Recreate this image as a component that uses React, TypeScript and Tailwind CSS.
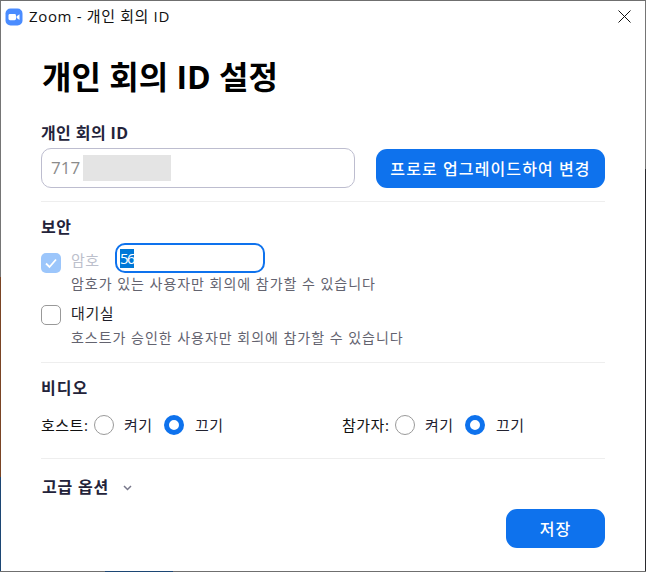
import React from "react";

function Radio({ on }: { on?: boolean }) {
  return on ? (
    <span className="block w-5 h-5 rounded-full border-[5px] border-[#0e72ed] bg-white shrink-0" />
  ) : (
    <span className="block w-5 h-5 rounded-full border border-[#9a9a9a] bg-white shrink-0" />
  );
}

function RadioGroup({ label, width }: { label: string; width: string }) {
  return (
    <div className={`flex items-center h-5 text-[15px] text-[#222230] ${width}`}>
      <span className="text-[#111] w-[53px] whitespace-nowrap tracking-[0.5px]">{label}</span>
      <Radio />
      <span className="ml-[10px] w-[40px] tracking-[0.5px]">켜기</span>
      <Radio on />
      <span className="ml-[11px] tracking-[0.5px]">끄기</span>
    </div>
  );
}

export default function App() {
  return (
    <div className="w-[646px] h-[572px] flex flex-col bg-white overflow-hidden font-['Open_Sans','Noto_Sans_CJK_KR',sans-serif]">
      <div className="h-px bg-[#6f6f6f] shrink-0" />
      <div className="flex flex-1 min-h-0">
        <div className="w-px flex flex-col shrink-0">
          <div className="h-[276px] bg-[#757575]" />
          <div className="h-[200px] bg-[#7a4424]" />
          <div className="flex-1 bg-[#1c4674]" />
        </div>
        <div className="flex-1 flex flex-col min-w-0">
          <div className="h-[31px] flex items-center justify-between shrink-0 pl-[4px] pr-[14px]">
            <div className="flex items-center gap-[6px]">
              <svg width="18" height="18" viewBox="0 0 18 18">
                <rect x="0.5" y="0.5" width="17" height="17" rx="5" fill="#4a8cff" />
                <rect x="3.5" y="6" width="7.5" height="6.2" rx="1.4" fill="#fff" />
                <path d="M11.6 8.2 14.5 6.2V12L11.6 10Z" fill="#fff" />
              </svg>
              <span className="text-[15px] text-[#111] whitespace-nowrap tracking-[0.65px]">Zoom - 개인 회의 ID</span>
            </div>
            <svg width="13" height="13" viewBox="0 0 13 13" stroke="#111" strokeWidth="1">
              <path d="M0.5 0.5 12.5 12.5M12.5 0.5 0.5 12.5" />
            </svg>
          </div>

          <div className="flex flex-col pl-[40px] w-[604px]">
            <h1 className="mt-[23px] h-[44px] leading-[44px] text-[32px] font-bold text-black whitespace-nowrap pl-px">개인 회의 ID 설정</h1>
            <div className="mt-[23px] h-[22px] leading-[22px] text-[16px] font-bold text-[#23233a] tracking-[0.4px]">개인 회의 ID</div>
            <div className="mt-[4px] flex justify-between items-start">
              <div className="w-[314px] h-10 rounded-[10px] border border-[#bdbdcf] flex items-center pl-[9px]">
                <span className="text-[17px] text-[#8b8b8b] w-[32px]">717</span>
                <span className="block w-[88px] h-[26px] bg-[#e4e4e4]" />
              </div>
              <button className="mt-px w-[229px] h-[39px] rounded-[11px] bg-[#0e72ed] text-white text-[16px] whitespace-nowrap font-medium tracking-[1.1px]">프로로 업그레이드하여 변경</button>
            </div>
            <div className="mt-[13px] h-px bg-[#eeeeee]" />

            <div className="mt-[15px] h-[20px] leading-[20px] text-[16px] font-bold text-[#23233a] tracking-[0.5px]">보안</div>
            <div className="mt-[6px] flex items-start">
              <span className="mt-[10px] w-5 h-5 rounded-[5px] bg-[#9cc6fb] flex items-center justify-center shrink-0">
                <svg width="14" height="12" viewBox="0 0 14 12" fill="none" stroke="#fff" strokeWidth="1.8">
                  <path d="M2 6.5 5.5 10 12 2.5" />
                </svg>
              </span>
              <span className="ml-[10px] mt-[6px] h-[22px] leading-[22px] w-[44px] text-[15px] text-[#bcc0cc] tracking-[0.5px]">암호</span>
              <span className="w-[150px] h-[30px] rounded-[10px] border-2 border-[#0e72ed] flex items-center pl-[3px]">
                <span className="bg-[#0078d7] text-white text-[15px] leading-[19px] w-[14px] tracking-[-1.5px] whitespace-nowrap">56</span>
              </span>
            </div>
            <div className="ml-[30px] mt-px h-[20px] leading-[20px] text-[14px] text-[#63636f] tracking-[0.98px] whitespace-nowrap">암호가 있는 사용자만 회의에 참가할 수 있습니다</div>
            <div className="mt-[10px] flex items-start">
              <span className="mt-[1px] w-5 h-5 rounded-[5px] border-[1.5px] border-[#999999] bg-white shrink-0" />
              <span className="ml-[10px] h-[22px] leading-[18px] text-[15px] text-[#1f1f2a] tracking-[0.6px]">대기실</span>
            </div>
            <div className="ml-[30px] mt-[2px] h-[20px] leading-[20px] text-[14px] text-[#63636f] tracking-[0.98px] whitespace-nowrap">호스트가 승인한 사용자만 회의에 참가할 수 있습니다</div>
            <div className="mt-[14px] h-px bg-[#eeeeee]" />

            <div className="mt-[15px] h-[20px] leading-[20px] text-[16px] font-bold text-[#23233a] tracking-[1px]">비디오</div>
            <div className="mt-[17px] flex">
              <RadioGroup label="호스트:" width="w-[301px]" />
              <RadioGroup label="참가자:" width="w-[263px]" />
            </div>
            <div className="mt-[23px] h-px bg-[#eeeeee]" />

            <div className="mt-[18px] h-[20px] flex items-center text-[16px] font-bold text-[#23233a] tracking-[0.8px] pl-px">
              <span>고급 옵션</span>
              <svg className="ml-[14px] mt-[2px]" width="9" height="6" viewBox="0 0 9 6" fill="none" stroke="#77778a" strokeWidth="1.5">
                <path d="M1 1 4.5 4.5 8 1" />
              </svg>
            </div>
            <div className="mt-[12px] flex justify-end">
              <button className="w-[99px] h-[39px] rounded-[11px] bg-[#0e72ed] text-white text-[16px] font-medium tracking-[1px]">저장</button>
            </div>
          </div>
        </div>
        <div className="w-px flex flex-col shrink-0">
          <div className="h-[168px] bg-[#757575]" />
          <div className="flex-1 bg-[#2a2a2e]" />
        </div>
      </div>
      <div className="h-px flex shrink-0">
        <div className="w-[105px] bg-[#6f6f6f]" />
        <div className="w-[68px] bg-[#1c4674]" />
        <div className="flex-1 bg-[#6f6f6f]" />
      </div>
    </div>
  );
}
